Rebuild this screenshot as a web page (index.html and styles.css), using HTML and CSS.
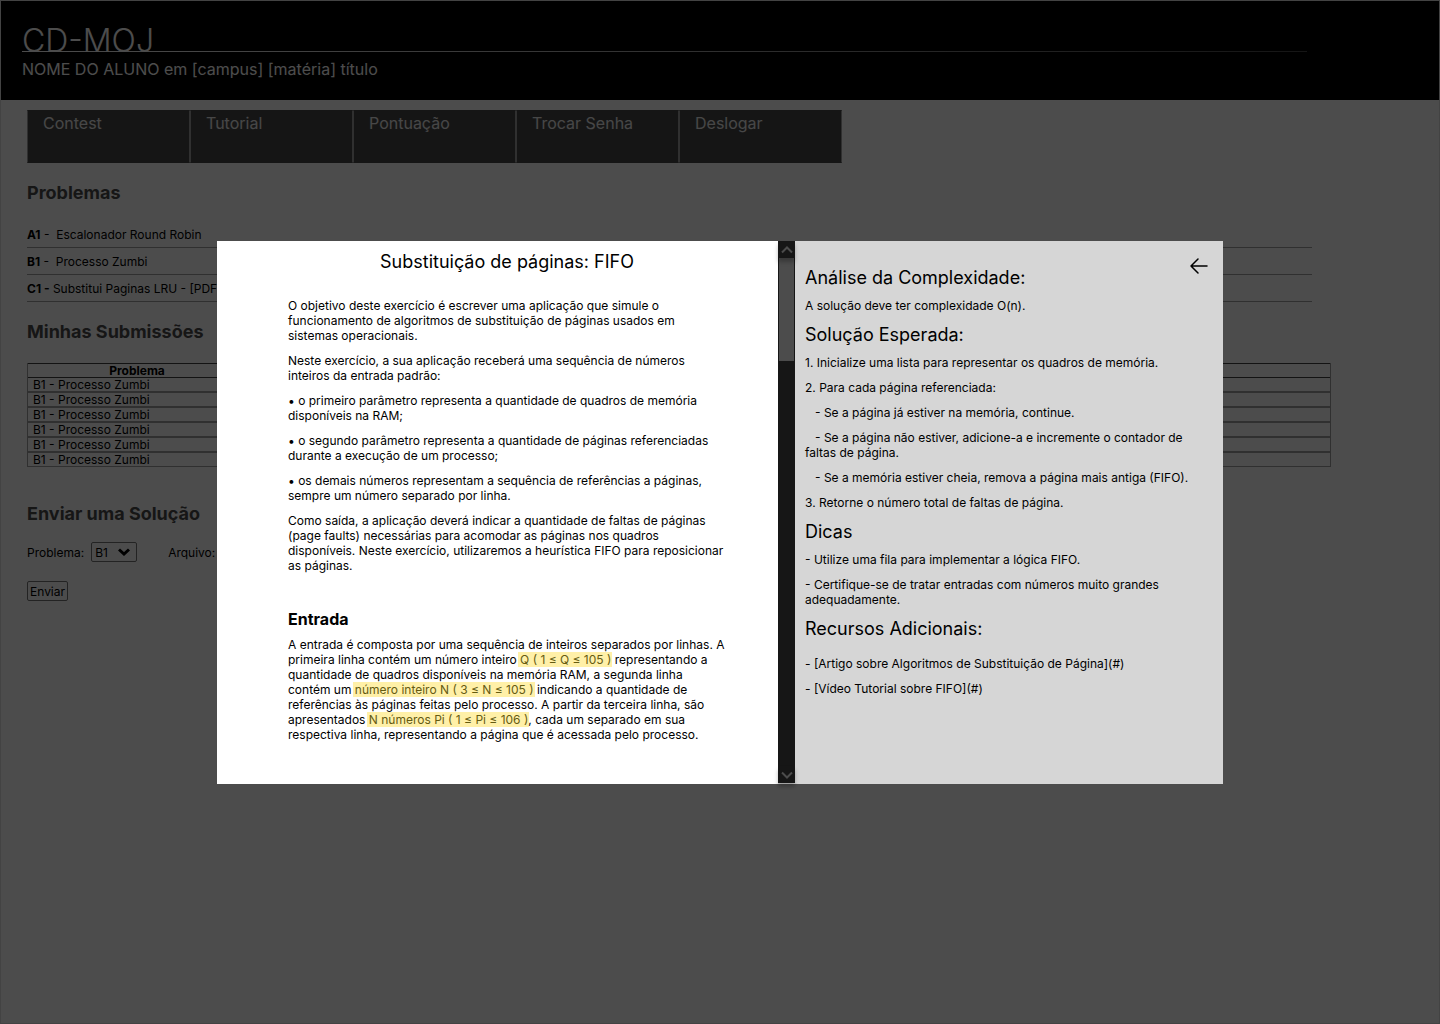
FILE: index.html
```html
<!DOCTYPE html>
<html lang="pt-BR">
<head>
<meta charset="utf-8">
<meta name="viewport" content="width=device-width, initial-scale=1">
<title>CD-MOJ</title>
<link rel="stylesheet" href="styles.css">
</head>
<body>
<div class="page">
  <header class="site-header">
    <h1 class="site-title">CD-MOJ</h1>
    <p class="site-user">NOME DO ALUNO em [campus] [matéria] título</p>
  </header>
  <nav class="menu">
    <a class="menu-item" href="#">Contest</a>
    <a class="menu-item" href="#">Tutorial</a>
    <a class="menu-item" href="#">Pontuação</a>
    <a class="menu-item" href="#">Trocar Senha</a>
    <a class="menu-item" href="#">Deslogar</a>
  </nav>
  <main class="content">
    <h2 class="section-title">Problemas</h2>
    <ul class="problems">
      <li class="problem"><b>A1</b> -&nbsp; Escalonador Round Robin</li>
      <li class="problem"><b>B1</b> -&nbsp; Processo Zumbi</li>
      <li class="problem"><b>C1 -</b> Substitui Paginas LRU - [PDF]</li>
    </ul>
    <h2 class="section-title">Minhas Submissões</h2>
    <table class="submissions">
      <thead><tr><th class="col-problem" scope="col">Problema</th><td></td></tr></thead>
      <tbody>
        <tr><td>B1 - Processo Zumbi</td><td></td></tr>
        <tr><td>B1 - Processo Zumbi</td><td></td></tr>
        <tr><td>B1 - Processo Zumbi</td><td></td></tr>
        <tr><td>B1 - Processo Zumbi</td><td></td></tr>
        <tr><td>B1 - Processo Zumbi</td><td></td></tr>
        <tr><td>B1 - Processo Zumbi</td><td></td></tr>
      </tbody>
    </table>
    <h2 class="section-title">Enviar uma Solução</h2>
    <form class="submit-form">
      <div class="fields">
        <label for="problem">Problema:</label>
        <span class="select-box">
          <select id="problem" class="select"><option>B1</option></select>
          <svg class="select-arrow" width="12" height="8" viewBox="0 0 12 8" fill="none" stroke="#000" stroke-width="3"><path d="M1 1.5 6 6l5-4.500"/></svg>
        </span>
        <label class="file-label" for="file">Arquivo:</label>
        <input id="file" class="file" type="file">
      </div>
      <button class="send" type="submit">Enviar</button>
    </form>
  </main>
</div>

<div class="backdrop">
  <div class="modal" role="dialog" aria-modal="true" aria-labelledby="statement-title">
    <article class="statement">
      <h2 id="statement-title" class="modal-heading statement-title">Substituição de páginas: FIFO</h2>
      <div class="text">
        <p>O objetivo deste exercício é escrever uma aplicação que simule o funcionamento de algoritmos de substituição de páginas usados em sistemas operacionais.</p>
        <p>Neste exercício, a sua aplicação receberá uma sequência de números inteiros da entrada padrão:</p>
        <p>• o primeiro parâmetro representa a quantidade de quadros de memória disponíveis na RAM;</p>
        <p>• o segundo parâmetro representa a quantidade de páginas referenciadas durante a execução de um processo;</p>
        <p>• os demais números representam a sequência de referências a páginas, sempre um número separado por linha.</p>
        <p>Como saída, a aplicação deverá indicar a quantidade de faltas de páginas (page faults) necessárias para acomodar as páginas nos quadros disponíveis. Neste exercício, utilizaremos a heurística FIFO para reposicionar as páginas.</p>
      </div>
      <h3 class="entry-title">Entrada</h3>
      <p>A entrada é composta por uma sequência de inteiros separados por linhas. A primeira linha contém um número inteiro <mark>Q ( 1 ≤ Q ≤ 105 )</mark> representando a quantidade de quadros disponíveis na memória RAM, a segunda linha contém um <mark>número inteiro N ( 3 ≤ N ≤ 105 )</mark> indicando a quantidade de referências às páginas feitas pelo processo. A partir da terceira linha, são apresentados <mark>N números Pi ( 1 ≤ Pi ≤ 106 )</mark>, cada um separado em sua respectiva linha, representando a página que é acessada pelo processo.</p>
    </article>
    <div class="scrollbar">
      <button class="scroll-button" type="button" aria-label="Rolar para cima"><svg width="12" height="8" viewBox="0 0 12 8" fill="none" stroke="#4c4c4c" stroke-width="2"><path d="M1 6.500 6 1.500l5 5"/></svg></button>
      <div class="scroll-thumb"></div>
      <button class="scroll-button scroll-down" type="button" aria-label="Rolar para baixo"><svg width="12" height="8" viewBox="0 0 12 8" fill="none" stroke="#4c4c4c" stroke-width="2"><path d="M1 1.500 6 6.500l5-5"/></svg></button>
    </div>
    <aside class="analysis">
      <button class="back" type="button" aria-label="Voltar"><svg width="18" height="16" viewBox="0 0 18 16" fill="none" stroke="#000" stroke-width="1.500" stroke-linecap="round" stroke-linejoin="round"><path d="M17 8H1M8 1 1 8l7 7"/></svg></button>
      <h3 class="modal-heading">Análise da Complexidade:</h3>
      <p>A solução deve ter complexidade O(n).</p>
      <h3 class="modal-heading">Solução Esperada:</h3>
      <p>1. Inicialize uma lista para representar os quadros de memória.</p>
      <p>2. Para cada página referenciada:</p>
      <p class="step">- Se a página já estiver na memória, continue.</p>
      <p class="step">- Se a página não estiver, adicione-a e incremente o contador de faltas de página.</p>
      <p class="step">- Se a memória estiver cheia, remova a página mais antiga (FIFO).</p>
      <p>3. Retorne o número total de faltas de página.</p>
      <h3 class="modal-heading">Dicas</h3>
      <p>- Utilize uma fila para implementar a lógica FIFO.</p>
      <p>- Certifique-se de tratar entradas com números muito grandes adequadamente.</p>
      <h3 class="modal-heading">Recursos Adicionais:</h3>
      <div class="text resources">
        <p>- [Artigo sobre Algoritmos de Substituição de Página](#)</p>
        <p>- [Vídeo Tutorial sobre FIFO](#)</p>
      </div>
    </aside>
  </div>
</div>
</body>
</html>
```
FILE: styles.css
```css
* { box-sizing: border-box; }

body {
  margin: 0;
  font-family: Inter, "Liberation Sans", sans-serif;
  font-size: 12px;
  line-height: 15px;
  color: #000;
  background: #fff;
}

h1, h2, h3, p, ul { margin: 0; padding: 0; }
button, select, input { font: inherit; color: inherit; }
button { cursor: pointer; }

.page {
  min-height: 100vh;
  border: 1px solid #e0e0e0;
}

/* Header */
.site-header {
  height: 99px;
  padding: 20px 132px 0 21px;
  background: #000;
  color: #fff;
}
.site-title {
  height: 31px;
  border-bottom: 1px solid;
  border-image: linear-gradient(to right, #fff, #484848) 1;
  font-size: 32px;
  line-height: 39px;
  font-weight: 300;
}
.site-user {
  padding-top: 7px;
  font-size: 16px;
  line-height: 20px;
}

/* Menu */
.menu {
  display: flex;
  max-width: 841px;
  margin-top: 10px;
  padding-left: 26px;
}
.menu-item {
  flex: 1;
  height: 53px;
  padding: 2px 15px;
  border: 1px solid #484848;
  border-left-color: #a0a0a0;
  border-right-color: #a0a0a0;
  background: #484848;
  color: #eee;
  font-size: 16px;
  line-height: 20px;
  text-decoration: none;
}

/* Page content */
.content { padding: 19px 108px 0 26px; }
.section-title {
  color: #4c4c4c;
  font-size: 18px;
  line-height: 22px;
  font-weight: 700;
}
.problems {
  margin: 17px 19px 19px 0;
  list-style: none;
}
.problem {
  height: 27px;
  padding-top: 6px;
  border-bottom: 1px solid #a0a0a0;
}
.submissions {
  width: 100%;
  margin: 20px 0 36px;
  border-collapse: separate;
  border-spacing: 0;
  border-left: 1px solid #a0a0a0;
  border-right: 1px solid #a0a0a0;
}
.submissions th, .submissions td {
  height: 15px;
  padding: 0 5px;
  border-top: 1px solid #a0a0a0;
  border-bottom: 1px solid #a0a0a0;
  line-height: 13px;
}
.submissions thead th, .submissions thead td {
  height: 14px;
  border-top-color: #404040;
  border-bottom: 0;
}
.submissions tbody tr:first-child td { border-top-color: #404040; }
.submissions .col-problem { width: 218px; }

.submit-form { padding-top: 17px; }
.fields {
  display: flex;
  align-items: center;
}
.select-box {
  display: inline-grid;
  align-items: center;
  width: 46px;
  margin: 0 31px 0 7px;
}
.select {
  grid-area: 1 / 1;
  height: 20px;
  padding: 0 3px;
  border: 1px solid #767676;
  border-radius: 2px;
  background: transparent;
  appearance: none;
}
.select-arrow {
  grid-area: 1 / 1;
  justify-self: end;
  margin-right: 7px;
  pointer-events: none;
}
.file { width: 200px; height: 20px; margin-left: 8px; }
.send {
  display: block;
  height: 20px;
  margin-top: 19px;
  padding: 0 2px;
  border: 1px solid #767676;
  border-radius: 2px;
  background: transparent;
}

/* Modal */
.backdrop {
  position: fixed;
  inset: 0;
  display: flex;
  align-items: center;
  justify-content: center;
  padding-top: 1px;
  background: rgba(0, 0, 0, 0.7);
}
.modal {
  display: grid;
  grid-template-columns: 561fr 17px 428fr;
  width: 90%;
  max-width: 1006px;
  min-height: 543px;
  background: #d6d6d6;
}
.modal-heading {
  font-size: 18px;
  line-height: 22px;
  font-weight: 400;
}
.text {
  display: flex;
  flex-direction: column;
  gap: 10px;
}
.statement {
  padding: 10px 52px 40px 71px;
  background: #fff;
}
.statement-title {
  margin-bottom: 25px;
  text-align: center;
}
.entry-title {
  margin: 36px 0 8px;
  font-size: 16px;
  line-height: 20px;
  font-weight: 700;
}
mark {
  background: #fff0a8;
  color: #655b12;
  box-shadow: -2px 0 #fff0a8, 1px 0 #fff0a8;
}

.scrollbar {
  display: flex;
  flex-direction: column;
  margin-bottom: 1px;
  background: #161616;
}
.scroll-button {
  display: grid;
  place-items: center;
  height: 17px;
  padding: 0;
  border: 0;
  background: #161616;
  box-shadow: 0 4px 4px rgba(0, 0, 0, 0.25);
  z-index: 1;
}
.scroll-down { margin-top: auto; }
.scroll-thumb {
  height: 103px;
  margin: 0 1px;
  background: #4c4c4c;
}

.analysis {
  display: flex;
  flex-direction: column;
  gap: 10px;
  padding: 15px 10px 10px;
  background: #d6d6d6;
}
.analysis .modal-heading { margin: 1px 0 -1px; }
.back {
  display: grid;
  align-self: flex-end;
  height: 18px;
  margin: 2px 5px -20px 0;
  padding: 0;
  border: 0;
  background: transparent;
}
.step { text-indent: 10px; }
.resources { padding-top: 7px; }
```
